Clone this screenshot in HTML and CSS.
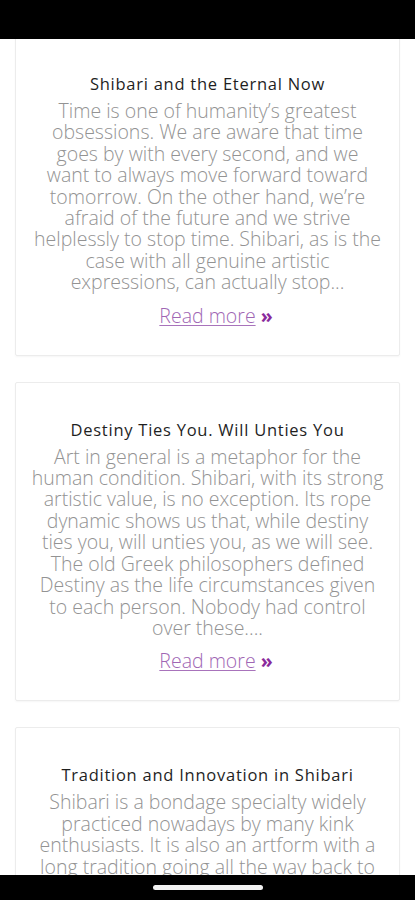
FILE: index.html
```html
<!DOCTYPE html>
<html lang="en">
<head>
<meta charset="utf-8">
<title>Shibari articles</title>
<link rel="stylesheet" href="styles.css">
</head>
<body>
<div class="status-bar"></div>
<main class="list">
  <article class="card">
    <h2 class="card-title">Shibari and the Eternal Now</h2>
    <p class="card-text">Time is one of humanity’s greatest obsessions. We are aware that time goes by with every second, and we<br>want to always move forward toward tomorrow. On the other hand, we’re afraid of the future and we strive helplessly to stop time. Shibari, as is the case with all genuine artistic expressions, can actually stop...</p>
    <a class="read-more" href="#"><span class="read-more-label">Read more</span> <span class="read-more-arrow">»</span></a>
  </article>
  <article class="card">
    <h2 class="card-title">Destiny Ties You. Will Unties You</h2>
    <p class="card-text">Art in general is a metaphor for the human condition. Shibari, with its strong artistic value, is no exception. Its rope dynamic shows us that, while destiny ties you, will unties you, as we will see. The old Greek philosophers defined Destiny as the life circumstances given to each person. Nobody had control over these....</p>
    <a class="read-more" href="#"><span class="read-more-label">Read more</span> <span class="read-more-arrow">»</span></a>
  </article>
  <article class="card">
    <h2 class="card-title">Tradition and Innovation in Shibari</h2>
    <p class="card-text">Shibari is a bondage specialty widely practiced nowadays by many kink enthusiasts. It is also an artform with a long tradition going all the way back to the Edo period in Japan, when it was used...</p>
    <a class="read-more" href="#"><span class="read-more-label">Read more</span> <span class="read-more-arrow">»</span></a>
  </article>
</main>
<div class="nav-bar"><span class="home-pill"></span></div>
</body>
</html>
```

FILE: styles.css
```css
* { box-sizing: border-box; }
html, body { margin: 0; padding: 0; background: #fff; }
body {
  font-family: "Open Sans", "Noto Sans", sans-serif;
  color: #333;
}
.status-bar {
  position: fixed;
  top: 0; left: 0; right: 0;
  height: 39px;
  background: #000;
  z-index: 2;
}
.nav-bar {
  position: fixed;
  left: 0; right: 0; bottom: 0;
  height: 25px;
  background: #000;
  z-index: 2;
  display: flex;
  justify-content: center;
  align-items: center;
}
.home-pill {
  width: 110px;
  height: 5px;
  border-radius: 3px;
  background: #f2f2f2;
}
.list {
  display: flex;
  flex-direction: column;
  gap: 26px;
  padding: 36px 15px 40px;
}
.card {
  border: 1px solid #ececec;
  border-radius: 2px;
  box-shadow: 0 1px 2px rgba(0,0,0,0.04);
  padding: 36px 14px 28px;
  text-align: center;
  display: flex;
  flex-direction: column;
  align-items: center;
}
.card-title {
  margin: 0;
  font-size: 16.5px;
  line-height: 22px;
  font-weight: 400;
  letter-spacing: 0.75px;
  color: #1f1f1f;
}
.card-text {
  margin: 5px 0 0;
  font-size: 19.5px;
  line-height: 21.4px;
  font-weight: 300;
  color: #939393;
}
.read-more {
  margin-top: 12px;
  padding-left: 17px;
  font-size: 19.5px;
  line-height: 22px;
  text-decoration: none;
}
.read-more-label {
  color: #a066b4;
  font-weight: 300;
  text-decoration: underline;
  text-decoration-color: #a873bb;
  text-underline-offset: 2px;
}
.read-more-arrow {
  color: #8a2a9c;
  font-weight: 700;
}
```
